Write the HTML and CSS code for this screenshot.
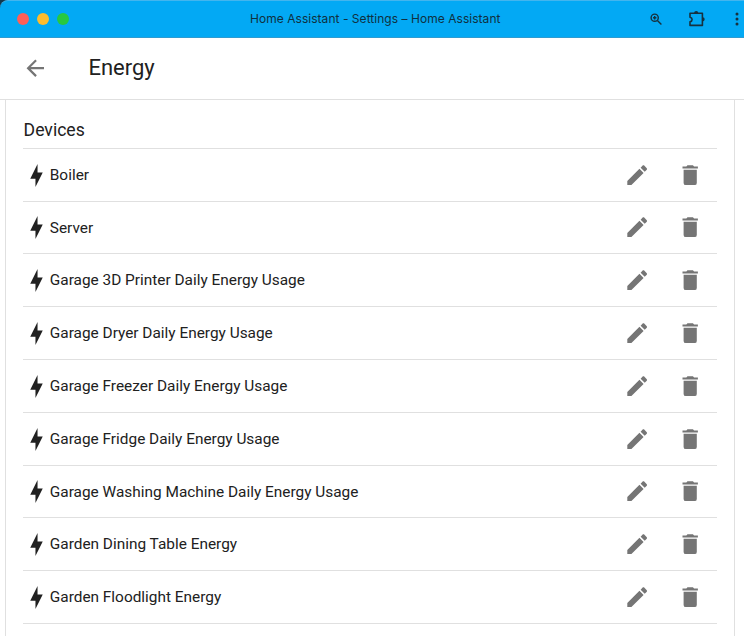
FILE: index.html
```html
<!DOCTYPE html>
<html lang="en">
<head>
<meta charset="utf-8">
<title>Home Assistant - Settings – Home Assistant</title>
<link rel="stylesheet" href="styles.css">
</head>
<body>
<svg class="symbols" aria-hidden="true">
  <symbol id="bolt" viewBox="0 0 24 24"><path d="M11 15H6L13 1V9H18L11 23V15Z"/></symbol>
  <symbol id="pencil" viewBox="0 0 24 24"><path d="M20.71,7.04C21.1,6.65 21.1,6 20.71,5.63L18.37,3.29C18,2.9 17.35,2.9 16.96,3.29L15.12,5.12L18.87,8.87M3,17.25V21H6.75L17.81,9.93L14.06,6.18L3,17.25Z"/></symbol>
  <symbol id="trash" viewBox="0 0 24 24"><path d="M19,4H15.5L14.5,3H9.5L8.5,4H5V6H19M6,19A2,2 0 0,0 8,21H16A2,2 0 0,0 18,19V7H6V19Z"/></symbol>
</svg>
<div class="corner"><header class="titlebar">
  <div class="lights"><i class="red"></i><i class="yellow"></i><i class="green"></i></div>
  <div class="window-title"><span>Home Assistant - Settings – Home Assistant</span></div>
  <div class="tools">
    <svg class="zoom" viewBox="0 0 12 12"><circle cx="4.7" cy="4.7" r="3.6"/><path d="M7.4 7.4L11.4 11.4M4.7 3V6.4M3 4.7H6.4"/></svg>
    <svg class="puzzle" viewBox="0 0 18 18"><path class="line" d="M2 3.2H14.4V15.4H2V11.8C4.8 11.2 4.8 7.8 2 7.2Z"/><path d="M6.1 3A2.1 2.1 0 0 1 10.3 3ZM14.6 7.2A2.1 2.1 0 0 1 14.6 11.4Z"/></svg>
    <svg class="dots" viewBox="0 0 4 14"><circle cx="2" cy="2" r="1.5"/><circle cx="2" cy="7" r="1.5"/><circle cx="2" cy="12" r="1.5"/></svg>
  </div>
</header></div>
<div class="toolbar">
  <svg class="back" viewBox="0 0 24 24"><path d="M20,11V13H8L13.5,18.5L12.08,19.92L4.16,12L12.08,4.08L13.5,5.5L8,11H20Z"/></svg>
  <h1>Energy</h1>
</div>
<main class="card">
  <h2>Devices</h2>
  <ul>
    <li><svg class="bolt"><use href="#bolt"/></svg><span>Boiler</span><svg class="action"><use href="#pencil"/></svg><svg class="action"><use href="#trash"/></svg></li>
    <li><svg class="bolt"><use href="#bolt"/></svg><span>Server</span><svg class="action"><use href="#pencil"/></svg><svg class="action"><use href="#trash"/></svg></li>
    <li><svg class="bolt"><use href="#bolt"/></svg><span>Garage 3D Printer Daily Energy Usage</span><svg class="action"><use href="#pencil"/></svg><svg class="action"><use href="#trash"/></svg></li>
    <li><svg class="bolt"><use href="#bolt"/></svg><span>Garage Dryer Daily Energy Usage</span><svg class="action"><use href="#pencil"/></svg><svg class="action"><use href="#trash"/></svg></li>
    <li><svg class="bolt"><use href="#bolt"/></svg><span>Garage Freezer Daily Energy Usage</span><svg class="action"><use href="#pencil"/></svg><svg class="action"><use href="#trash"/></svg></li>
    <li><svg class="bolt"><use href="#bolt"/></svg><span>Garage Fridge Daily Energy Usage</span><svg class="action"><use href="#pencil"/></svg><svg class="action"><use href="#trash"/></svg></li>
    <li><svg class="bolt"><use href="#bolt"/></svg><span>Garage Washing Machine Daily Energy Usage</span><svg class="action"><use href="#pencil"/></svg><svg class="action"><use href="#trash"/></svg></li>
    <li><svg class="bolt"><use href="#bolt"/></svg><span>Garden Dining Table Energy</span><svg class="action"><use href="#pencil"/></svg><svg class="action"><use href="#trash"/></svg></li>
    <li><svg class="bolt"><use href="#bolt"/></svg><span>Garden Floodlight Energy</span><svg class="action"><use href="#pencil"/></svg><svg class="action"><use href="#trash"/></svg></li>
  </ul>
</main>
</body>
</html>
```
FILE: styles.css
```css
* { box-sizing: border-box; }
body {
  margin: 0;
  height: 636px;
  overflow: hidden;
  display: flex;
  flex-direction: column;
  background: #fff;
  color: #212121;
  font-family: Roboto, sans-serif;
}
svg { display: block; flex: none; }
.symbols { display: none; }
.corner { flex: none; height: 38px; background: #12384d; }
.titlebar {
  display: grid;
  grid-template-columns: 250px 1fr auto;
  align-items: center;
  height: 38px;
  background: #03a9f4;
  border-top: 1px solid #43b5ee;
  border-bottom: 1px solid #2f9bd0;
  border-top-left-radius: 8px;
}
.lights { display: flex; gap: 8px; padding-left: 17px; }
.lights i { width: 12px; height: 12px; border-radius: 50%; }
.red { background: #ff5f57; }
.yellow { background: #febc2e; }
.green { background: #28c840; }
.window-title {
  font: 12px/16px Inter, sans-serif;
  letter-spacing: 0.04px;
  color: #10303f;
  white-space: nowrap;
}
.tools { display: flex; align-items: center; padding-right: 5.5px; }
.zoom { width: 12px; height: 12px; margin-right: 26px; fill: none; stroke: #17313e; stroke-width: 1.4; }
.puzzle { width: 18px; height: 18px; margin-right: 28.5px; fill: #17313e; }
.puzzle .line { fill: none; stroke: #17313e; stroke-width: 1.6; stroke-linejoin: round; }
.dots { width: 4px; height: 14px; fill: #17313e; }
.toolbar {
  flex: none;
  display: flex;
  align-items: center;
  height: 62px;
  padding-left: 22px;
  border-bottom: 1px solid #e0e0e0;
}
.back { width: 26.4px; height: 26.4px; fill: #757575; }
h1 { margin: 0 0 2px 40px; font-size: 22px; line-height: 30px; font-weight: 400; }
.card {
  flex: 1;
  min-height: 0;
  margin: 0 9px 0 5px;
  padding: 0 17px;
  border: solid #e0e0e0;
  border-width: 0 1px;
}
h2 {
  margin: 0;
  height: 47.8px;
  padding: 18px 0 0 0.6px;
  font-size: 17.6px;
  line-height: 24px;
  font-weight: 400;
}
ul { list-style: none; margin: 0; padding: 0; border-top: 1px solid #e0e0e0; }
li {
  display: flex;
  align-items: center;
  height: 52.8px;
  padding-top: 0.4px;
  border-bottom: 1px solid #e0e0e0;
}
.bolt { width: 25px; height: 25px; margin: 0.6px 0 0 0.6px; fill: #212121; }
li span { flex: 1; margin-left: 1.2px; font-size: 15.4px; line-height: 22px; white-space: nowrap; }
.action { width: 26.4px; height: 26.4px; margin-left: 26.4px; fill: #757575; }
.action:last-child { margin-right: 13.5px; }
```
